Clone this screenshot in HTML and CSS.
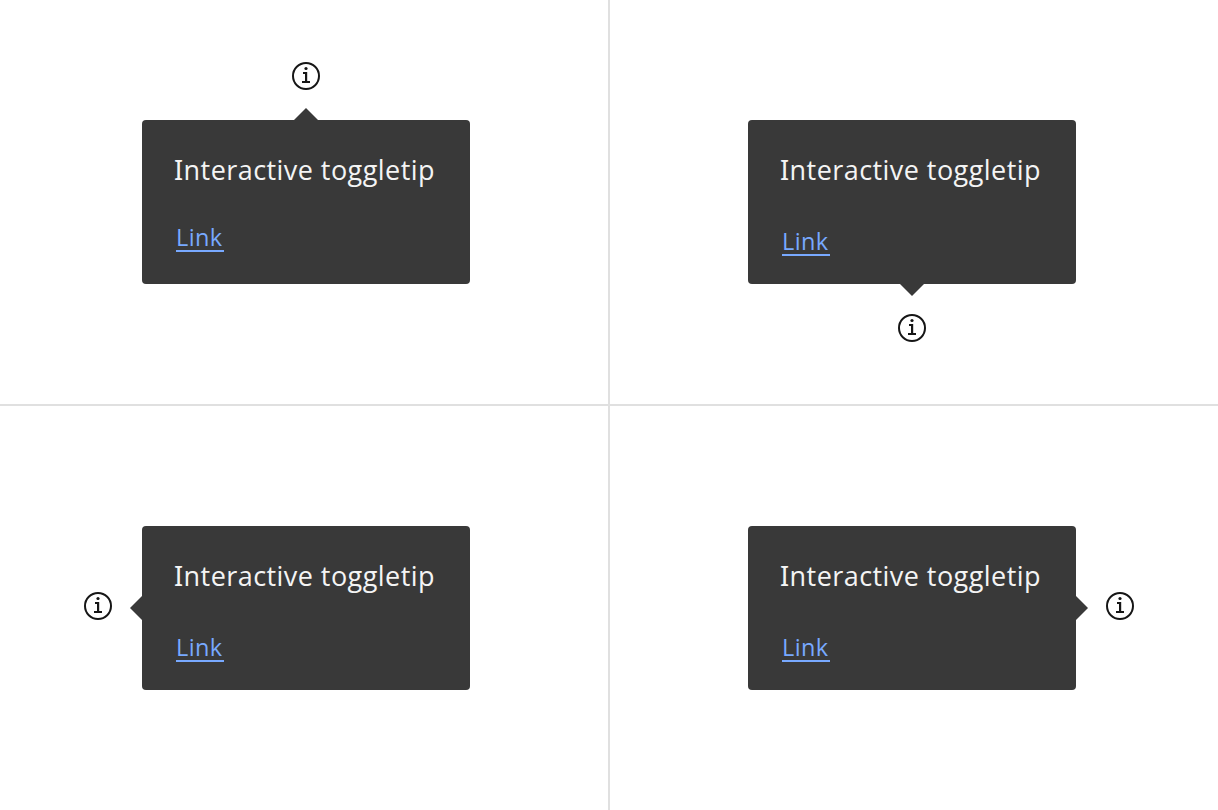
FILE: index.html
```html
<!DOCTYPE html>
<html lang="en">
<head>
<meta charset="utf-8">
<title>Interactive toggletip</title>
<link rel="stylesheet" href="styles.css">
</head>
<body>
<svg class="sprite" aria-hidden="true">
  <symbol id="information" viewBox="0 0 32 32">
    <circle cx="16" cy="16" r="13" fill="none" stroke="currentColor" stroke-width="2"/>
    <path fill="currentColor" d="M17.2 21v-9H13v2h2v7h-3v2h8v-2z"/>
    <circle cx="16" cy="8.5" r="1.6" fill="currentColor"/>
  </symbol>
</svg>
<main class="grid">
  <section class="cell cell-bottom">
    <svg class="icon"><use href="#information"/></svg>
    <div class="toggletip caret-up">
      <p class="label">Interactive toggletip</p>
      <a class="link">Link</a>
    </div>
  </section>
  <section class="cell cell-top">
    <div class="toggletip caret-down">
      <p class="label">Interactive toggletip</p>
      <a class="link">Link</a>
    </div>
    <svg class="icon"><use href="#information"/></svg>
  </section>
  <section class="cell cell-right">
    <svg class="icon"><use href="#information"/></svg>
    <div class="toggletip caret-left">
      <p class="label">Interactive toggletip</p>
      <a class="link">Link</a>
    </div>
  </section>
  <section class="cell cell-left">
    <div class="toggletip caret-right">
      <p class="label">Interactive toggletip</p>
      <a class="link">Link</a>
    </div>
    <svg class="icon"><use href="#information"/></svg>
  </section>
</main>
</body>
</html>
```
FILE: styles.css
```css
* { box-sizing: border-box; }
body { margin: 0; background: #fff; color: #161616; font-family: "Open Sans", sans-serif; }
.sprite { display: none; }
.grid {
  display: grid;
  grid-template: 404px 404px / 608px 608px;
  gap: 2px;
  width: 1218px;
  height: 810px;
  background: #e0e0e0;
}
.cell { display: flex; background: #fff; }
.cell-bottom, .cell-top { flex-direction: column; align-items: center; gap: 28px; }
.cell-bottom { padding: 60px 138px 0 142px; }
.cell-top { padding: 120px 142px 0 138px; }
.cell-right, .cell-left { align-items: flex-start; gap: 28px; padding-top: 120px; }
.cell-right { padding-left: 82px; }
.cell-left { padding-left: 138px; }
.cell-right .icon, .cell-left .icon { margin-top: 64px; }
.icon { display: block; width: 32px; height: 32px; flex: none; }
.toggletip {
  position: relative;
  display: flex;
  flex-direction: column;
  align-items: flex-start;
  justify-content: space-between;
  flex: none;
  width: 328px;
  height: 164px;
  padding: 32px 32px 28px;
  border-radius: 4px;
  background: #393939;
}
.caret-up { padding-bottom: 32px; }
.label {
  margin: 0;
  color: #f4f4f4;
  font-size: 27px;
  font-weight: 370;
  line-height: 36px;
  letter-spacing: .44px;
  white-space: nowrap;
}
.label::first-letter { font-family: "Noto Sans", sans-serif; }
.link {
  width: 48px;
  height: 28px;
  margin-left: 2px;
  border-bottom: 2px solid #78a9ff;
  color: #78a9ff;
  font-size: 23.5px;
  font-weight: 370;
  line-height: 26px;
  letter-spacing: .4px;
}
.toggletip::after {
  content: "";
  position: absolute;
  background: #393939;
}
.caret-up::after, .caret-down::after { left: 152px; width: 24px; height: 12px; }
.caret-up::after { top: -12px; clip-path: polygon(0 100%, 50% 0, 100% 100%); }
.caret-down::after { bottom: -12px; clip-path: polygon(0 0, 100% 0, 50% 100%); }
.caret-left::after, .caret-right::after { top: 70px; width: 12px; height: 24px; }
.caret-left::after { left: -12px; clip-path: polygon(100% 0, 100% 100%, 0 50%); }
.caret-right::after { right: -12px; clip-path: polygon(0 0, 100% 50%, 0 100%); }
```
